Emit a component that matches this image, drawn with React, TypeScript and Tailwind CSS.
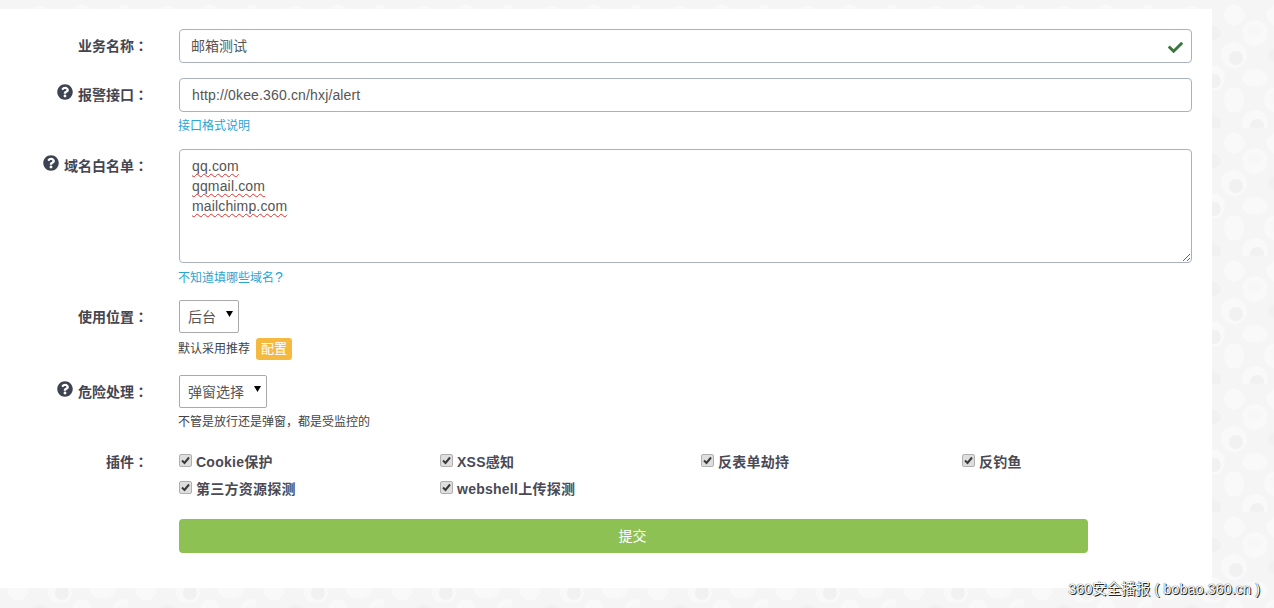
import React from "react";
import { FaCheck, FaQuestionCircle } from "react-icons/fa";

const LIGHT = "#f9f9f9";
const DARK = "#f1f1f1";

const Blob = ({ x, y, kind }: { x: number; y: number; kind: string }) => {
  if (kind === "d") return <ellipse cx={x} cy={y} rx="9" ry="7" fill={DARK} />;
  if (kind === "l") return <rect x={x - 10} y={y - 10} width="20" height="20" rx="8" fill={LIGHT} transform={`rotate(45 ${x} ${y})`} />;
  if (kind === "h") return <ellipse cx={x} cy={y} rx="13" ry="9" fill={LIGHT} />;
  if (kind === "v") return <ellipse cx={x} cy={y} rx="10" ry="13" fill={LIGHT} />;
  if (kind === "r")
    return (
      <g>
        <circle cx={x} cy={y} r="13" fill={LIGHT} />
        <circle cx={x - 1} cy={y - 2} r="6" fill="#f7f7f7" />
      </g>
    );
  return (
    <g>
      <circle cx={x} cy={y} r="13" fill={LIGHT} />
      <circle cx={x + 2} cy={y + 3} r="7" fill={DARK} />
    </g>
  );
};

const blobs: [number, number, string][] = [
  [82, 15, "l"], [125, 15, "l"], [39, 15, "h"],
  [60, 33, "d"], [103, 33, "r"], [18, 33, "d"],
  [82, 55, "s"], [125, 55, "d"], [39, 55, "r"],
  [60, 78, "s"], [103, 78, "h"], [18, 78, "l"],
  [82, 100, "v"], [125, 100, "r"], [39, 100, "d"],
  [60, 123, "d"], [103, 123, "s"], [18, 123, "h"],
];

const Pattern = () => (
  <svg className="absolute inset-0 w-full h-full" aria-hidden="true">
    <defs>
      <pattern id="bgp" width="128" height="128" patternUnits="userSpaceOnUse">
        <rect width="128" height="128" fill="#f5f5f5" />
        {blobs.map(([x, y, k], i) => (
          <Blob key={i} x={x} y={y} kind={k} />
        ))}
      </pattern>
    </defs>
    <rect width="100%" height="100%" fill="url(#bgp)" />
  </svg>
);

const Label = ({ text, q }: { text: string; q?: boolean }) => (
  <label className="w-[148px] shrink-0 pt-[6px] flex justify-end items-start font-bold text-[14px] leading-5 text-[#45454f]">
    {q && <FaQuestionCircle className="text-[16px] text-[#3d4350] mr-[5px] mt-0" />}
    <span>
      {text}
      <span className="font-['Noto_Sans_CJK_TC',sans-serif]">：</span>
    </span>
  </label>
);

const Help = ({ children, link }: { children: React.ReactNode; link?: boolean }) => (
  <div className={"mt-[5px] -ml-px h-[17px] text-[12px] leading-[19px] " + (link ? "text-[#2aa5d4]" : "text-[#444]")}>{children}</div>
);

const Select = ({ w, value }: { w: string; value: string }) => (
  <div className={"relative h-[33px] " + w}>
    <select
      defaultValue={value}
      className="appearance-none w-full h-full border border-[#a9a9a9] rounded-[2px] bg-white pl-[8px] pt-[1px] text-[14px] text-[#555]"
    >
      <option>{value}</option>
    </select>
    <svg className="absolute right-[6px] top-[11px] pointer-events-none" width="7" height="6" viewBox="0 0 7 6">
      <path d="M0 0H7L3.5 6Z" fill="#000" />
    </svg>
  </div>
);

const Check = ({ text }: { text: string }) => (
  <label className="w-[261px] h-[27px] flex items-start font-bold text-[14px] leading-5 tracking-[0.25px] text-[#4a4a55]">
    <span className="mt-[2px] mr-[4px] w-[13px] h-[13px] shrink-0 rounded-[2px] border border-[#b0b0b0] bg-[#dedede] flex items-center justify-center">
      <svg width="9" height="9" viewBox="0 0 9 9">
        <path d="M1 4.5L3.5 7L8 1.5" fill="none" stroke="#3a3a3a" strokeWidth="2" />
      </svg>
    </span>
    {text}
  </label>
);

const Squiggle = ({ children }: { children: string }) => (
  <div className="h-5">
    <span className="underline decoration-wavy decoration-[#e0302a] decoration-1 underline-offset-[2px] [text-decoration-skip-ink:none]">
      {children}
    </span>
  </div>
);

export default function App() {
  return (
    <div className="relative w-[1274px] h-[608px] overflow-hidden pt-[9px] font-['Liberation_Sans','Noto_Sans_CJK_SC',sans-serif]">
      <Pattern />
      <div className="relative w-[1212px] h-[579px] bg-white pt-[20px] pr-[20px] flex flex-col">
        <div className="flex mb-[15px]">
          <Label text="业务名称" />
          <div className="ml-[31px] flex-1 relative">
            <input
              defaultValue="邮箱测试"
              className="w-full h-[34px] border border-[#a9b1bf] rounded-[4px] px-[11px] pb-[2px] text-[14px] text-[#555] outline-none"
            />
            <FaCheck className="absolute right-[9px] top-[11px] text-[15px] text-[#3c763d]" />
          </div>
        </div>

        <div className="flex mb-[15px]">
          <Label text="报警接口" q />
          <div className="ml-[31px] flex-1">
            <input
              defaultValue="http://0kee.360.cn/hxj/alert"
              className="w-full h-[34px] border border-[#a9b1bf] rounded-[4px] px-[12px] text-[14px] tracking-[0.15px] text-[#555] outline-none"
            />
            <Help link>接口格式说明</Help>
          </div>
        </div>

        <div className="flex mb-[15px]">
          <Label text="域名白名单" q />
          <div className="ml-[31px] flex-1">
            <div className="h-[114px] border border-[#a9b1bf] rounded-[4px] px-[12px] py-[6px] text-[14px] leading-5 tracking-[0.15px] text-[#555] resize-y overflow-auto">
              <Squiggle>qq.com</Squiggle>
              <Squiggle>qqmail.com</Squiggle>
              <Squiggle>mailchimp.com</Squiggle>
            </div>
            <Help link>
              不知道填哪些域名<span className="ml-[1px] text-[14px]">?</span>
            </Help>
          </div>
        </div>

        <div className="flex mb-[15px]">
          <Label text="使用位置" />
          <div className="ml-[31px] flex-1">
            <Select w="w-[60px]" value="后台" />
            <div className="mt-[5px] -ml-px h-[22px] flex items-center text-[12px] text-[#444]">
              默认采用推荐
              <span className="ml-[6px] w-[36px] h-[22px] rounded-[3px] bg-[#f6b93f] text-white text-[13px] flex items-center justify-center">
                配置
              </span>
            </div>
          </div>
        </div>

        <div className="flex mb-[22px]">
          <Label text="危险处理" q />
          <div className="ml-[31px] flex-1">
            <Select w="w-[88px]" value="弹窗选择" />
            <Help>不管是放行还是弹窗，都是受监控的</Help>
          </div>
        </div>

        <div className="flex">
          <label className="w-[148px] shrink-0 flex justify-end font-bold text-[14px] leading-5 text-[#45454f]">
            <span className="-mt-px">
              插件<span className="font-['Noto_Sans_CJK_TC',sans-serif]">：</span>
            </span>
          </label>
          <div className="ml-[31px] flex-1 flex flex-wrap">
            <Check text="Cookie保护" />
            <Check text="XSS感知" />
            <Check text="反表单劫持" />
            <div className="w-[230px]">
              <Check text="反钓鱼" />
            </div>
            <Check text="第三方资源探测" />
            <Check text="webshell上传探测" />
          </div>
        </div>

        <button className="ml-[179px] mt-[13px] w-[909px] h-[34px] rounded-[4px] bg-[#8dc153] pr-[2px] text-white text-[14px]">
          提交
        </button>
      </div>
      <div className="absolute right-[14px] bottom-[9px] text-[14.5px] leading-5 text-white [text-shadow:1px_1px_0_#222,0_0_1px_#000]">
        360安全播报 ( bobao.360.cn )
      </div>
    </div>
  );
}
